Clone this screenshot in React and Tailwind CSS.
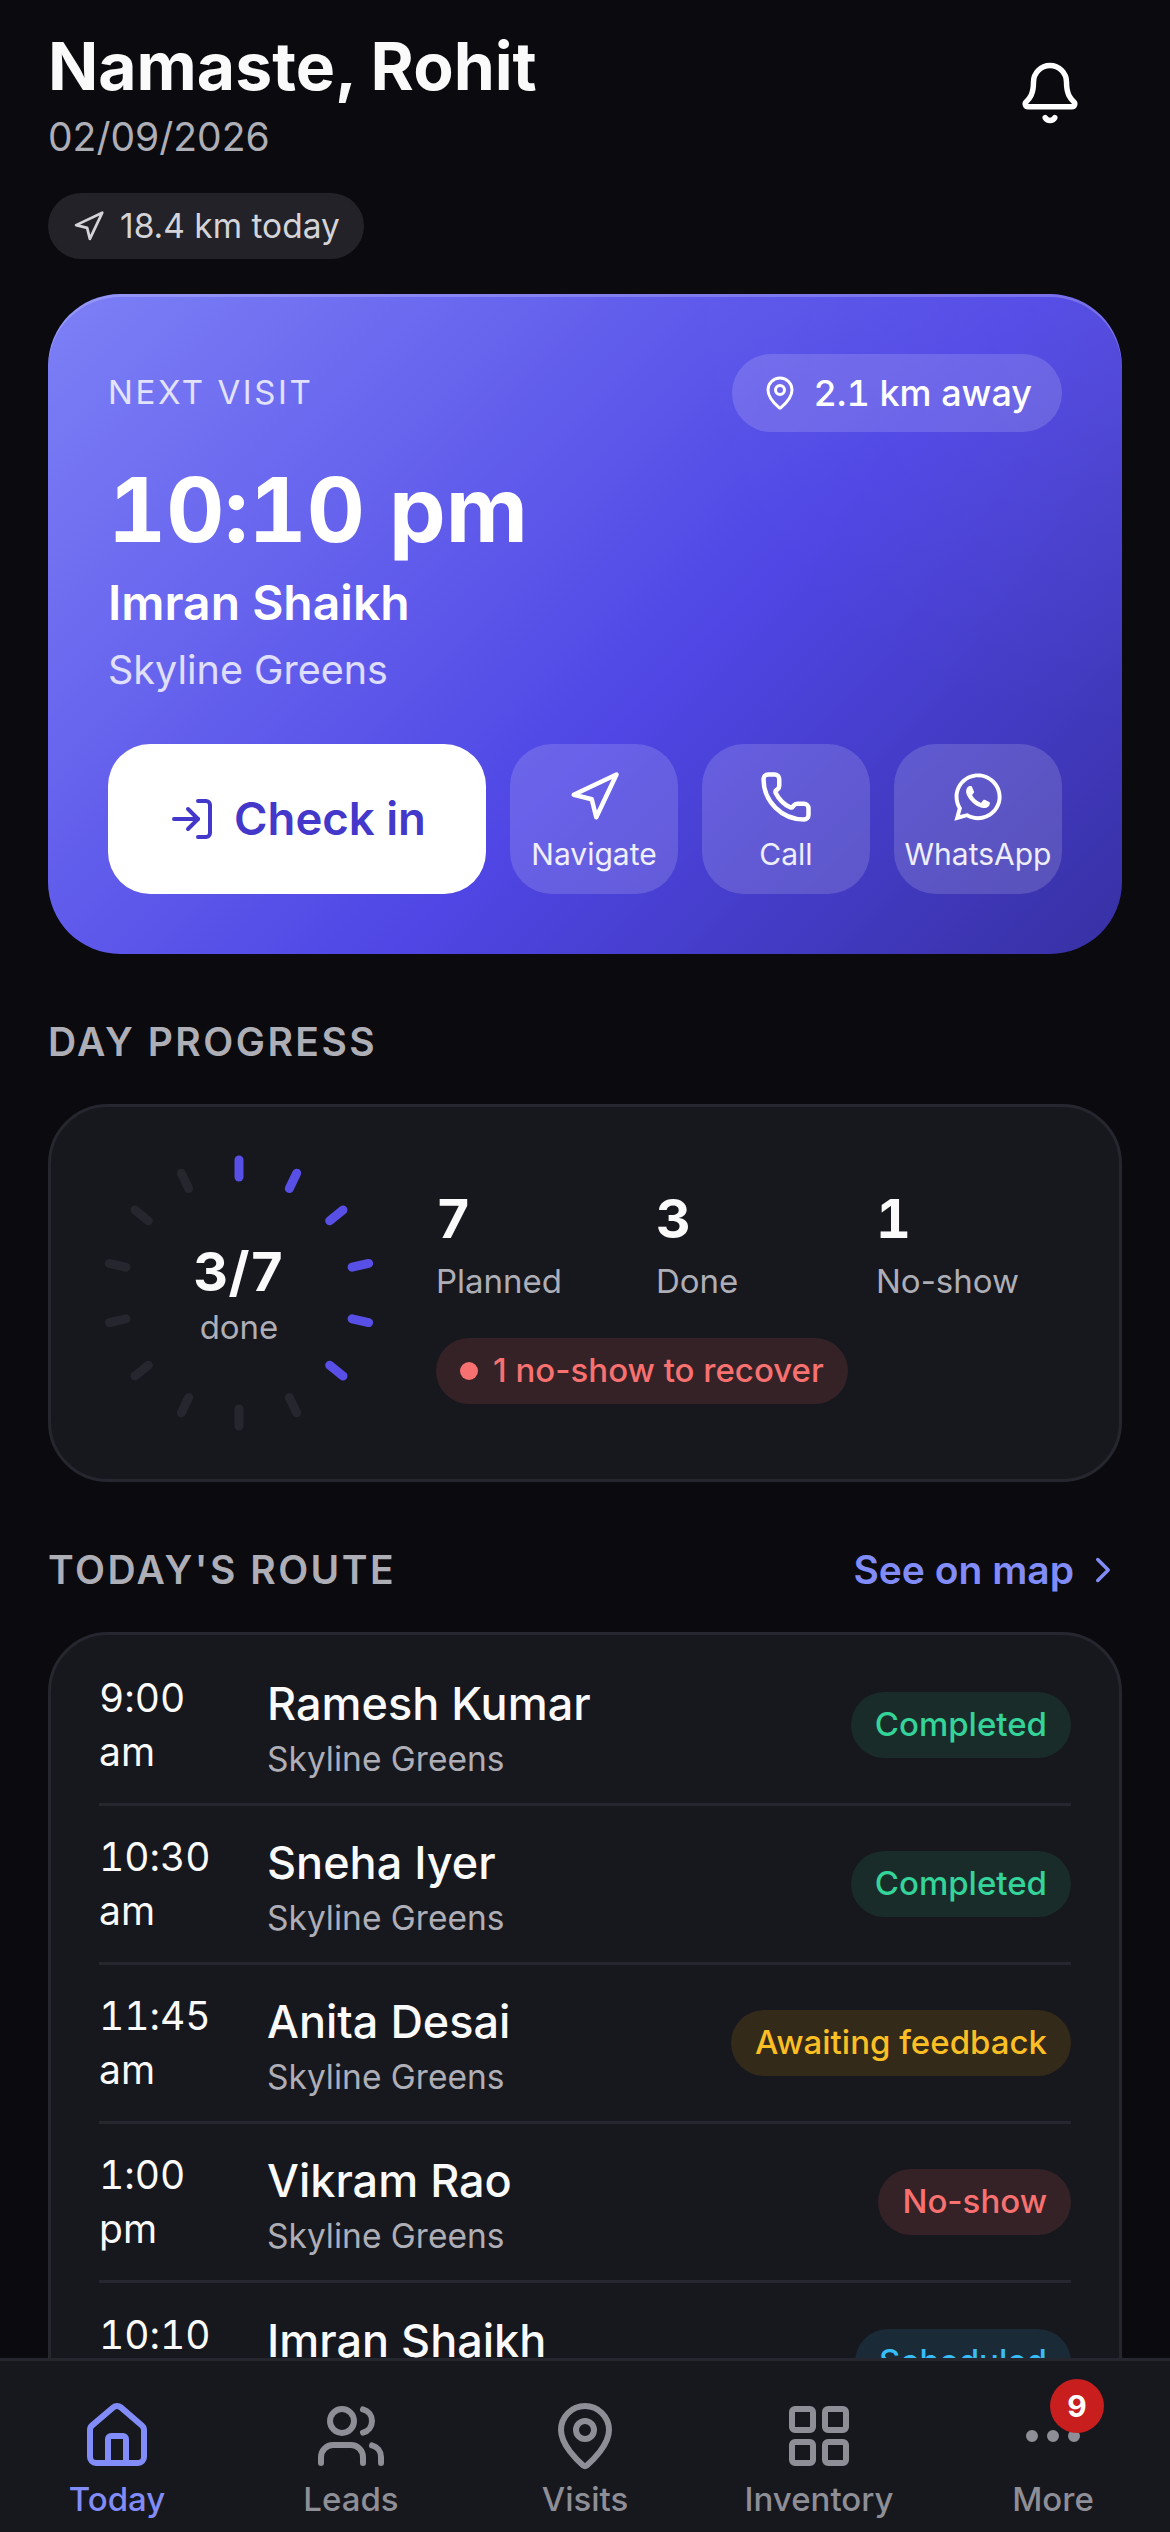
import React from 'react';
import { Bell, Navigation, MapPin, LogIn, Phone, ChevronRight, House, Users, LayoutGrid, Ellipsis } from 'lucide-react';
import { FaWhatsapp } from 'react-icons/fa';

const stops = [
    { time: '9:00 am', name: 'Ramesh Kumar', status: 'Completed', pill: 'bg-[#1a2c2a] text-[#34d399]' },
    { time: '10:30 am', name: 'Sneha Iyer', status: 'Completed', pill: 'bg-[#1a2c2a] text-[#34d399]' },
    { time: '11:45 am', name: 'Anita Desai', status: 'Awaiting feedback', pill: 'bg-[#332a1a] text-[#fbbf24]' },
    { time: '1:00 pm', name: 'Vikram Rao', status: 'No-show', pill: 'bg-[#352226] text-[#f87171]' },
    { time: '10:10 pm', name: 'Imran Shaikh', status: 'Scheduled', pill: 'bg-[#1a2a36] text-[#38bdf8]' },
];

const tabs = [
    { label: 'Today', icon: House, active: true },
    { label: 'Leads', icon: Users },
    { label: 'Visits', icon: MapPin },
    { label: 'Inventory', icon: LayoutGrid },
    { label: 'More', icon: Ellipsis, badge: 9 },
];

const stats = [
    { value: 7, label: 'Planned' },
    { value: 3, label: 'Done' },
    { value: 1, label: 'No-show' },
];

// 14 ticks, 3 of 7 done lights up the first 6
const ProgressRing = () => (
    <div className="relative w-[300px] h-[300px] shrink-0 flex flex-col items-center justify-center pt-[4px]">
        <svg className="absolute inset-0" width="300" height="300" viewBox="0 0 300 300">
            {Array.from({ length: 14 }).map((_, i) => (
                <line
                    key={i}
                    x1="150"
                    y1="17"
                    x2="150"
                    y2="34"
                    stroke={i < 6 ? '#5850e6' : '#26262f'}
                    strokeWidth="9"
                    strokeLinecap="round"
                    transform={`rotate(${(i * 360) / 14} 150 150)`}
                />
            ))}
        </svg>
        <p className="text-[54px] leading-[60px] font-bold tabular-nums text-[#fafafa]">3/7</p>
        <p className="mt-[4px] text-[33px] leading-[42px] text-[#aeaeb6]">done</p>
    </div>
);

const VisitAction = ({ icon: Icon, label, filled }) => (
    <div className="w-[168px] h-[150px] pt-[3px] rounded-[42px] bg-white/15 flex flex-col items-center justify-center gap-[12px] text-white/90">
        {filled ? <Icon size={54} className="text-white" /> : <Icon size={54} strokeWidth={2} className="text-white" />}
        <span className="text-[30px] leading-[36px] whitespace-nowrap">{label}</span>
    </div>
);

const App = () => {
    return (
        <div className="relative w-[1170px] h-[2532px] overflow-hidden bg-[#0a0a0f] font-['Inter',sans-serif] [font-feature-settings:'calt'_0]">
            <div className="px-[48px] pt-[30px]">
                {/* Header */}
                <div className="flex items-start justify-between">
                    <div>
                        <h1 className="text-[66px] leading-[72px] font-bold text-[#fafafa]">Namaste, Rohit</h1>
                        <p className="mt-[8px] text-[39px] leading-[54px] text-[#aeaeb6]">02/09/2026</p>
                    </div>
                    <div className="mt-[30px] mr-[39px] text-white">
                        <Bell size={66} strokeWidth={2} />
                    </div>
                </div>
                <div className="mt-[29px] inline-flex items-center gap-[15px] h-[66px] px-[24px] rounded-full bg-[#222228] text-[#d4d4d8]">
                    <Navigation size={33} strokeWidth={2} />
                    <span className="text-[33.5px]">18.4 km today</span>
                </div>

                {/* Next visit */}
                <div className="mt-[35px] h-[660px] rounded-[72px] p-[60px] bg-[radial-gradient(circle_at_100%_0%,rgba(255,255,255,0.05),transparent_35%),linear-gradient(135deg,#7d80f6_0%,#4f46e5_58%,#3730a3_100%)] shadow-[inset_0_3px_0_rgba(255,255,255,0.2)]">
                    <div className="flex items-center justify-between">
                        <span className="text-[33px] tracking-[2.6px] text-white/80">NEXT VISIT</span>
                        <div className="flex items-center gap-[15px] h-[78px] px-[30px] rounded-full bg-white/15 text-white">
                            <MapPin size={36} strokeWidth={2} />
                            <span className="text-[36px] font-medium tabular-nums">2.1 km away</span>
                        </div>
                    </div>
                    <p className="mt-[21px] text-[90px] leading-[114px] font-bold tabular-nums text-white">10:10 pm</p>
                    <p className="mt-[3px] text-[48px] leading-[66px] font-semibold text-white">Imran Shaikh</p>
                    <p className="mt-[7px] text-[39.5px] leading-[54px] text-white/80">Skyline Greens</p>
                    <div className="mt-[47px] flex gap-[24px]">
                        <div className="flex-1 h-[150px] rounded-[42px] bg-white flex items-center justify-center gap-[18px] text-[#4338ca]">
                            <LogIn size={48} strokeWidth={2} />
                            <span className="text-[45.5px] font-semibold">Check in</span>
                        </div>
                        <VisitAction icon={Navigation} label="Navigate" />
                        <VisitAction icon={Phone} label="Call" />
                        <VisitAction icon={FaWhatsapp} label="WhatsApp" filled />
                    </div>
                </div>

                {/* Day progress */}
                <h2 className="mt-[64px] text-[39px] leading-[48px] font-semibold tracking-[2.5px] text-[#aeaeb6]">DAY PROGRESS</h2>
                <div className="mt-[38px] h-[378px] rounded-[60px] border-[3px] border-[#26262f] bg-[#17171e] flex items-center pl-[38px]">
                    <ProgressRing />
                    <div className="ml-[47px] w-[660px] self-start pt-[79px]">
                        <div className="grid grid-cols-3">
                            {stats.map(s => (
                                <div key={s.label}>
                                    <p className="text-[54px] leading-[66px] font-bold tabular-nums text-[#fafafa]">{s.value}</p>
                                    <p className="mt-[5px] text-[33px] leading-[48px] text-[#aeaeb6]">{s.label}</p>
                                </div>
                            ))}
                        </div>
                        <div className="mt-[33px] inline-flex items-center gap-[15px] h-[66px] px-[24px] rounded-full bg-[#352226] text-[#f87171]">
                            <span className="w-[18px] h-[18px] rounded-full bg-[#f87171]"></span>
                            <span className="text-[33px] font-medium">1 no-show to recover</span>
                        </div>
                    </div>
                </div>

                {/* Route */}
                <div className="mt-[59px] flex items-center justify-between">
                    <h2 className="text-[39px] leading-[48px] font-semibold tracking-[2.5px] text-[#aeaeb6]">TODAY'S ROUTE</h2>
                    <div className="flex items-center gap-[8px] mr-[-2px] text-[#818cf8]">
                        <span className="text-[39px] font-semibold">See on map</span>
                        <ChevronRight size={42} strokeWidth={2} />
                    </div>
                </div>
                <div className="mt-[32px] rounded-[60px] border-[3px] border-[#26262f] bg-[#17171e] px-[48px] pt-[12px]">
                    {stops.map((stop, i) => (
                        <div key={stop.name} className={`h-[159px] flex items-center ${i < stops.length - 1 ? 'border-b-[3px] border-[#26262f]' : ''}`}>
                            <p className="w-[120px] mr-[48px] shrink-0 text-[39px] leading-[54px] tabular-nums text-[#fafafa]">{stop.time}</p>
                            <div className="flex-1 pt-[10px]">
                                <p className="text-[45px] leading-[54px] font-medium text-[#fafafa]">{stop.name}</p>
                                <p className="mt-[4px] text-[33.5px] leading-[48px] text-[#aeaeb6]">Skyline Greens</p>
                            </div>
                            <span className={`h-[66px] px-[24px] rounded-full flex items-center text-[33px] font-medium ${stop.pill}`}>{stop.status}</span>
                        </div>
                    ))}
                </div>
            </div>

            {/* Bottom tabs */}
            <div className="absolute left-0 right-0 bottom-0 h-[174px] border-t-[3px] border-[#26262f] bg-[#17171e] grid grid-cols-5">
                {tabs.map(tab => (
                    <div key={tab.label} className={`relative flex flex-col items-center pt-[39px] ${tab.active ? 'text-[#818cf8]' : 'text-[#8e8e96]'}`}>
                        <tab.icon size={72} strokeWidth={2} />
                        <span className="mt-[6px] text-[33px] leading-[42px] font-medium">{tab.label}</span>
                        {tab.badge && (
                            <span className="absolute top-[18px] right-[66px] w-[54px] h-[54px] rounded-full bg-[#c81e1e] flex items-center justify-center text-[30px] font-bold text-white">{tab.badge}</span>
                        )}
                    </div>
                ))}
            </div>
        </div>
    );
};

export default App;
